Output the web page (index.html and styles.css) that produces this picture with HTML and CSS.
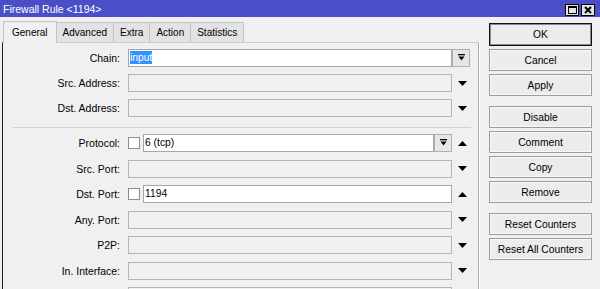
FILE: index.html
```html
<!DOCTYPE html>
<html lang="en">
<head>
    <meta charset="UTF-8">
    <meta name="viewport" content="width=device-width, initial-scale=1.0">
    <title>Firewall Rule &lt;1194&gt;</title>
    <link rel="stylesheet" href="styles.css">
</head>
<body>
    <div class="window">
        <div class="titlebar">
            <span class="title">Firewall Rule &lt;1194&gt;</span>
            <div class="tb-btns">
                <span class="tb-btn" aria-label="Maximize">
                    <svg width="9" height="8" viewBox="0 0 9 8"><rect x="0.5" y="0.5" width="8" height="7" fill="none" stroke="#000"/><rect x="0" y="0" width="9" height="2" fill="#000"/></svg>
                </span>
                <span class="tb-btn" aria-label="Close">
                    <svg width="8" height="8" viewBox="0 0 8 8"><path d="M1 1L7 7M7 1L1 7" stroke="#000" stroke-width="2"/></svg>
                </span>
            </div>
        </div>

        <div class="content">
            <div class="left">
                <div class="tabs">
                    <span class="tab active">General</span>
                    <span class="tab">Advanced</span>
                    <span class="tab">Extra</span>
                    <span class="tab">Action</span>
                    <span class="tab">Statistics</span>
                </div>

                <div class="panel">
                    <div class="row">
                        <span class="label">Chain:</span>
                        <span class="box on full"><span class="sel">input</span></span>
                        <span class="dd"><svg width="7" height="8" viewBox="0 0 7 8"><rect width="7" height="1.3"/><polygon points="0.5,2.6 6.5,2.6 3.5,6.5"/></svg></span>
                    </div>
                    <div class="row">
                        <span class="label">Src. Address:</span>
                        <span class="box full"></span>
                        <span class="arrow"><svg width="9" height="5" viewBox="0 0 9 5"><polygon points="0,0 9,0 4.5,5"/></svg></span>
                    </div>
                    <div class="row">
                        <span class="label">Dst. Address:</span>
                        <span class="box full"></span>
                        <span class="arrow"><svg width="9" height="5" viewBox="0 0 9 5"><polygon points="0,0 9,0 4.5,5"/></svg></span>
                    </div>

                    <div class="sep"></div>

                    <div class="group">
                        <div class="row">
                            <span class="label">Protocol:</span>
                            <span class="check"></span>
                            <span class="box on short">6 (tcp)</span>
                            <span class="dd"><svg width="7" height="8" viewBox="0 0 7 8"><rect width="7" height="1.3"/><polygon points="0.5,2.6 6.5,2.6 3.5,6.5"/></svg></span>
                            <span class="arrow"><svg width="9" height="5" viewBox="0 0 9 5"><polygon points="0,5 9,5 4.5,0"/></svg></span>
                        </div>
                        <div class="row">
                            <span class="label">Src. Port:</span>
                            <span class="box full"></span>
                            <span class="arrow"><svg width="9" height="5" viewBox="0 0 9 5"><polygon points="0,0 9,0 4.5,5"/></svg></span>
                        </div>
                        <div class="row">
                            <span class="label">Dst. Port:</span>
                            <span class="check"></span>
                            <span class="box on wide">1194</span>
                            <span class="arrow"><svg width="9" height="5" viewBox="0 0 9 5"><polygon points="0,5 9,5 4.5,0"/></svg></span>
                        </div>
                        <div class="row">
                            <span class="label">Any. Port:</span>
                            <span class="box full"></span>
                            <span class="arrow"><svg width="9" height="5" viewBox="0 0 9 5"><polygon points="0,0 9,0 4.5,5"/></svg></span>
                        </div>
                        <div class="row">
                            <span class="label">P2P:</span>
                            <span class="box full"></span>
                            <span class="arrow"><svg width="9" height="5" viewBox="0 0 9 5"><polygon points="0,0 9,0 4.5,5"/></svg></span>
                        </div>
                        <div class="row">
                            <span class="label">In. Interface:</span>
                            <span class="box full"></span>
                            <span class="arrow"><svg width="9" height="5" viewBox="0 0 9 5"><polygon points="0,0 9,0 4.5,5"/></svg></span>
                        </div>
                        <div class="row">
                            <span class="label"></span>
                            <span class="box full"></span>
                        </div>
                    </div>
                </div>
            </div>

            <div class="side">
                <button class="btn default">OK</button>
                <button class="btn">Cancel</button>
                <button class="btn gap">Apply</button>
                <button class="btn">Disable</button>
                <button class="btn">Comment</button>
                <button class="btn">Copy</button>
                <button class="btn gap">Remove</button>
                <button class="btn">Reset Counters</button>
                <button class="btn">Reset All Counters</button>
            </div>
        </div>
    </div>
</body>
</html>
```

FILE: styles.css
```css
body {
    margin: 0;
    font-family: "Liberation Sans", Arial, sans-serif;
    font-size: 10.3px;
    color: #000;
    background: #f0f0f0;
    overflow: hidden;
}
.window {
    width: 600px;
    height: 289px;
    display: flex;
    flex-direction: column;
    overflow: hidden;
}
.titlebar {
    height: 17px;
    flex-shrink: 0;
    background: #4a4fc7;
    display: flex;
    justify-content: space-between;
    align-items: center;
    padding: 0 5px 0 3px;
}
.title {
    color: #fff;
    font-size: 10.5px;
}
.tb-btns {
    display: flex;
    gap: 2px;
    align-self: flex-end;
    margin-bottom: 1px;
}
.tb-btn {
    width: 14px;
    height: 12px;
    box-sizing: border-box;
    border: 1px solid #000;
    background: #e4e4e4;
    display: flex;
    align-items: center;
    justify-content: center;
}
.content {
    flex: 1;
    display: flex;
    min-height: 0;
}
.left {
    width: 479px;
    padding-left: 2px;
    box-sizing: border-box;
    display: flex;
    flex-direction: column;
}
.tabs {
    height: 25px;
    flex-shrink: 0;
    display: flex;
    align-items: flex-end;
    padding-left: 1px;
    position: relative;
    z-index: 1;
    font-size: 10px;
}
.tab {
    height: 20px;
    box-sizing: border-box;
    padding: 0 6px;
    border: 1px solid #c4c4c4;
    border-left: none;
    border-bottom: none;
    background: #e3e3e3;
    line-height: 20px;
}
.tab.active {
    height: 22px;
    padding: 0 8px;
    border-left: 1px solid #c4c4c4;
    background: #f0f0f0;
    margin-bottom: -1px;
    line-height: 21px;
}
.panel {
    flex: 1;
    min-height: 0;
    overflow: hidden;
    border-left: 1px solid #1e1e1e;
    border-top: 1px solid #cdcdcd;
    border-right: 1px solid #a8a8a8;
    box-shadow: 1px 0 0 #fff;
    padding-top: 6px;
}
.row {
    display: flex;
    align-items: center;
    height: 18px;
    margin-bottom: 7px;
}
.group .row {
    margin-bottom: 7.5px;
}
.label {
    width: 117px;
    flex-shrink: 0;
    text-align: right;
    margin-right: 8px;
    font-size: 10.5px;
}
.box {
    height: 18px;
    box-sizing: border-box;
    border: 1px solid #b4b4b4;
    background: #f0f0f0;
    padding-left: 1px;
    line-height: 16px;
    flex-shrink: 0;
}
.box.on {
    background: #fff;
    border-color: #a6a6a6;
}
.box.full {
    width: 324px;
}
.box.short {
    width: 291px;
}
.box.wide {
    width: 309px;
}
.sel {
    display: inline-block;
    height: 13px;
    line-height: 13px;
    vertical-align: middle;
    margin-top: -2px;
    background: #3390ff;
    color: #fff;
}
.check {
    width: 12px;
    height: 12px;
    box-sizing: border-box;
    border: 1px solid #8d8d8d;
    background: #fff;
    margin-right: 3px;
    flex-shrink: 0;
}
.dd {
    width: 18px;
    height: 18px;
    box-sizing: border-box;
    border: 1px solid #b0b0b0;
    background: #e6e6e6;
    display: flex;
    align-items: center;
    justify-content: center;
    flex-shrink: 0;
}
.arrow {
    width: 20px;
    display: flex;
    justify-content: center;
}
.sep {
    height: 1px;
    background: #d2d2d2;
    margin: 10px 7px 6px 10px;
}
.side {
    width: 113px;
    box-sizing: border-box;
    padding: 6px 0 0 10px;
    display: flex;
    flex-direction: column;
}
.btn {
    width: 103px;
    height: 22px;
    box-sizing: border-box;
    margin: 0 0 3px 0;
    padding: 0;
    border: 1px solid #9c9c9c;
    background: #ececec;
    box-shadow: inset 0 0 0 1px #f8f8f8;
    font-family: "Liberation Sans", Arial, sans-serif;
    font-size: 10.3px;
    color: #000;
    flex-shrink: 0;
}
.btn.default {
    height: 23px;
    border-color: #111;
    box-shadow: inset 0 0 0 1px #8a8a8a;
}
.btn.gap {
    margin-bottom: 10px;
}
```
